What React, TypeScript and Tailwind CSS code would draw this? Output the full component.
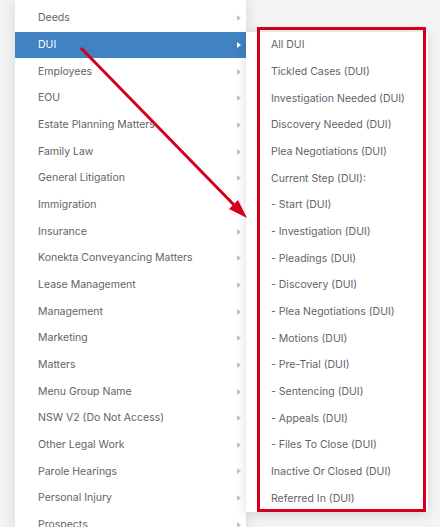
import React from "react";

const groups = [
  { label: "Deeds", sub: true },
  { label: "DUI", sub: true, active: true },
  { label: "Employees", sub: true },
  { label: "EOU", sub: true },
  { label: "Estate Planning Matters", sub: true },
  { label: "Family Law", sub: true },
  { label: "General Litigation", sub: true },
  { label: "Immigration", sub: false },
  { label: "Insurance", sub: true },
  { label: "Konekta Conveyancing Matters", sub: true },
  { label: "Lease Management", sub: true },
  { label: "Management", sub: true },
  { label: "Marketing", sub: true },
  { label: "Matters", sub: true },
  { label: "Menu Group Name", sub: true },
  { label: "NSW V2 (Do Not Access)", sub: true },
  { label: "Other Legal Work", sub: true },
  { label: "Parole Hearings", sub: true },
  { label: "Personal Injury", sub: true },
  { label: "Prospects", sub: true },
];

const duiItems = [
  "All DUI",
  "Tickled Cases (DUI)",
  "Investigation Needed (DUI)",
  "Discovery Needed (DUI)",
  "Plea Negotiations (DUI)",
  "Current Step (DUI):",
  "- Start (DUI)",
  "- Investigation (DUI)",
  "- Pleadings (DUI)",
  "- Discovery (DUI)",
  "- Plea Negotiations (DUI)",
  "- Motions (DUI)",
  "- Pre-Trial (DUI)",
  "- Sentencing (DUI)",
  "- Appeals (DUI)",
  "- Files To Close (DUI)",
  "Inactive Or Closed (DUI)",
  "Referred In (DUI)",
];

function Caret({ white }: { white?: boolean }) {
  return (
    <span
      className={`w-0 h-0 border-y-[3.5px] border-y-transparent border-l-[4px] ${
        white ? "border-l-white" : "border-l-[#c2c5c8]"
      }`}
    />
  );
}

export default function App() {
  return (
    <div
      className="relative h-[527px] w-[440px] overflow-hidden bg-[#f4f4f4] text-[10.5px] text-[#5f646a]"
      style={{ fontFamily: "Inter, 'Noto Sans', sans-serif" }}
    >
      <div className="flex items-start pl-[15px]">
        {/* main menu */}
        <div className="w-[231px] bg-white pt-[5px] shadow-[0_0_14px_rgba(0,0,0,0.12)]">
          {groups.map((g) => (
            <div
              key={g.label}
              className={`flex h-[26.67px] items-center justify-between pl-[23px] pr-[5px] ${
                g.active ? "bg-[#4182c3] text-white" : ""
              }`}
            >
              <span>{g.label}</span>
              {g.sub && <Caret white={g.active} />}
            </div>
          ))}
        </div>

        {/* submenu */}
        <div className="relative z-10 mt-[32px] w-[182px] rounded-r-[4px] bg-white shadow-[0_2px_12px_rgba(0,0,0,0.14)]">
          {duiItems.map((item) => (
            <div key={item} className="flex h-[26.67px] items-center pl-[25px]">
              {item}
            </div>
          ))}
        </div>
      </div>

      {/* annotation */}
      <div className="pointer-events-none absolute left-[257px] top-[27px] z-20 h-[485px] w-[169px] border-[3px] border-[#d3001b]" />
      <svg
        className="pointer-events-none absolute left-0 top-0 z-20"
        width="440"
        height="527"
        viewBox="0 0 440 527"
      >
        <line x1="81" y1="48" x2="236" y2="207" stroke="#d3001b" strokeWidth="3" />
        <polygon points="247,218 229,209 238,200" fill="#d3001b" />
      </svg>
    </div>
  );
}
